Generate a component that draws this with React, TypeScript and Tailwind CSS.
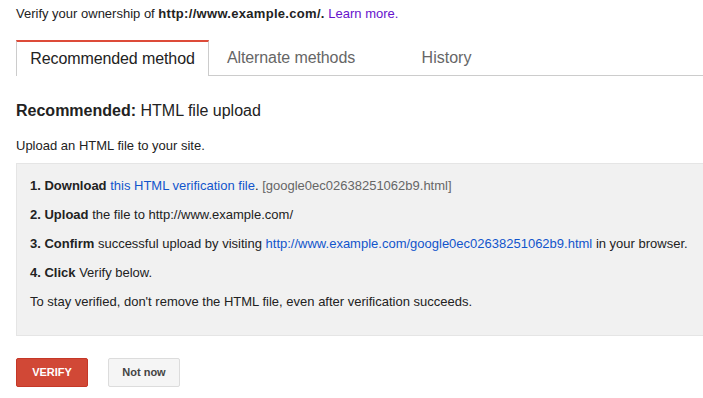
import React from "react";

export default function App() {
  return (
    <div
      className="w-[703px] h-[398px] overflow-hidden bg-white text-[#222] pl-4"
      style={{ fontFamily: '"Liberation Sans", Arial, sans-serif' }}
    >
      <div className="h-7 flex items-center text-[13px]">
        <span>
          Verify your ownership of <b className="tracking-[0.3px]">http://www.example.com/.</b>{" "}
          <span className="text-[#6611cc]">Learn more.</span>
        </span>
      </div>

      <div className="mt-3 flex h-9 text-[16px]">
        <div className="w-[193px] border-t-2 border-t-[#dd4b39] border-x border-x-[#cccccc] flex items-center justify-center text-[#222] tracking-[-0.1px]">
          Recommended method
        </div>
        <div className="w-[164px] border-b border-[#cccccc] flex items-center justify-center text-[#666] tracking-[-0.1px]">
          Alternate methods
        </div>
        <div className="w-[147px] border-b border-[#cccccc] flex items-center justify-center text-[#666]">
          History
        </div>
        <div className="flex-1 border-b border-[#cccccc]" />
      </div>

      <div className="mt-[23px] h-6 flex items-center text-[16px]">
        <span>
          <b>Recommended:</b> HTML file upload
        </span>
      </div>

      <div className="mt-[13px] h-5 flex items-center text-[13px]">
        Upload an HTML file to your site.
      </div>

      <div className="mt-[7px] w-[720px] bg-[#f1f1f1] border border-[#e5e5e5] pl-[13px] pt-[7px] pb-[19px] text-[13px] leading-[29px]">
        <div>
          <b>1. Download</b>{" "}
          <span className="text-[#1155cc]">this HTML verification file</span>.{" "}
          <span className="text-[#666]">[google0ec02638251062b9.html]</span>
        </div>
        <div>
          <b>2. Upload</b> the file to http://www.example.com/
        </div>
        <div>
          <b>3. Confirm</b> successful upload by visiting{" "}
          <span className="text-[#1155cc]">
            http://www.example.com/google0ec02638251062b9.html
          </span>{" "}
          in your browser.
        </div>
        <div>
          <b>4. Click</b> Verify below.
        </div>
        <div>To stay verified, don't remove the HTML file, even after verification succeeds.</div>
      </div>

      <div className="mt-[22px] flex gap-5">
        <button className="w-[72px] h-[29px] rounded-[2px] bg-[#d14836] border border-[#c53727] text-white text-[11px] font-bold">
          VERIFY
        </button>
        <button className="w-[72px] h-[29px] rounded-[2px] bg-[#f5f5f5] border border-[#dcdcdc] text-[#444] text-[11px] font-bold">
          Not now
        </button>
      </div>
    </div>
  );
}
